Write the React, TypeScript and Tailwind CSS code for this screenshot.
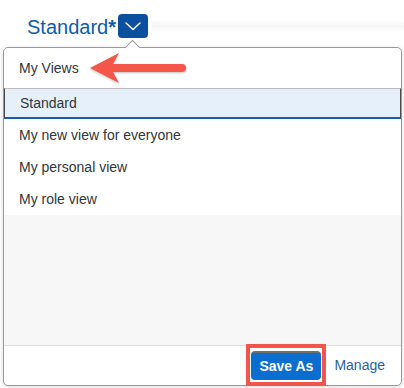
import React from 'react';

const items = ['My new view for everyone', 'My personal view', 'My role view'];

const App: React.FC = () => {
  return (
    <div className="relative w-[404px] h-[388px] bg-white overflow-hidden font-['Liberation_Sans',Arial,sans-serif] text-[#32363a]">
      {/* header */}
      <div className="flex items-center h-[24px] mt-[14px]">
        <span className="ml-[27px] text-[20px] leading-none text-[#0b5eab] pt-[2px]">
          Standard<span className="font-bold">*</span>
        </span>
        <button className="ml-[2px] w-[30px] h-[24px] rounded-[4px] bg-[#0b4f9f] flex items-center justify-center">
          <svg width="16" height="9" viewBox="0 0 16 9" fill="none">
            <path d="M1 1l7 6.5L15 1" stroke="white" strokeWidth="1.5" strokeLinecap="round" strokeLinejoin="round" />
          </svg>
        </button>
        <div className="flex-1 ml-[4px] h-[12px] bg-gradient-to-b from-white via-[#f5f5f5] to-white" />
      </div>

      {/* popover */}
      <div className="relative ml-[3px] mt-[9px] w-[399px] h-[339px] border border-[#9a9a9a] rounded-[5px] bg-white shadow-[0_1px_4px_rgba(0,0,0,0.15)] flex flex-col">
        <div className="absolute left-[123px] -top-[6px] w-[11px] h-[11px] rotate-45 bg-white border-l border-t border-[#9a9a9a]" />

        <div className="relative h-[40px] flex items-center pl-[15px] text-[14px] rounded-t-[5px] bg-white">My Views</div>

        <div className="h-[31px] flex items-center pl-[15px] text-[14px] bg-[#e5f0fa] border-t border-t-[#bdbdbd] border-x border-x-[#4a4a4a] border-b-2 border-b-[#1c5da8]">
          Standard
        </div>

        {items.map((t) => (
          <div key={t} className="h-[32px] flex items-center pl-[15px] text-[14px]">
            {t}
          </div>
        ))}

        <div className="flex-1 bg-[#f7f7f7] border-b border-[#dedede]" />

        <div className="h-[39px] flex items-center justify-end pr-[16px] rounded-b-[5px]">
          <div className="relative">
            <button className="w-[70px] h-[29px] rounded-[4px] bg-[#0a6ed1] border-t-2 border-t-[#6f6f6f] text-white font-bold text-[14px] flex items-center justify-center">
              Save As
            </button>
            <div className="absolute -left-[5px] -right-[5px] -top-[7px] -bottom-[6px] border-4 border-[#f1564b]" />
          </div>
          <span className="ml-[13px] text-[14px] text-[#1f62ad]">Manage</span>
        </div>
      </div>

      {/* annotation arrow */}
      <svg className="absolute left-[88px] top-[52px]" width="104" height="34" viewBox="0 0 104 34" fill="none">
        <path
          d="M2 16 L31 1 L25 12 L94 12 A4 4 0 0 1 94 20 L25 20 L31 31 Z"
          fill="#f4564a"
          style={{ filter: 'drop-shadow(0 1px 1px rgba(0,0,0,0.25))' }}
        />
      </svg>
    </div>
  );
};

export default App;
